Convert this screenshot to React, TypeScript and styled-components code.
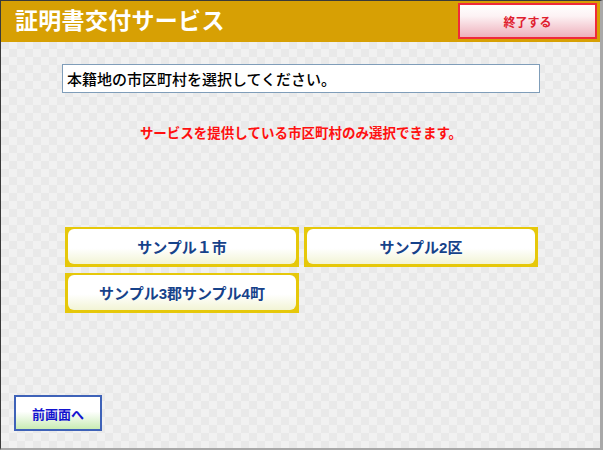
import styled, { createGlobalStyle } from "styled-components";

const GlobalStyle = createGlobalStyle`
  html, body {
    margin: 0;
    padding: 0;
  }
  body {
    font-family: "Liberation Sans", "Noto Sans CJK JP", sans-serif;
  }
`;

const Screen = styled.div`
  box-sizing: border-box;
  width: 603px;
  height: 450px;
  display: flex;
  flex-direction: column;
  border-left: 1px solid #3a3a3a;
  border-top: 1px solid #3a3a3a;
  border-right: 3px solid #a8a8a8;
  border-bottom: 2px solid #a8a8a8;
  background-color: #f1f1f1;
  background-image: linear-gradient(45deg, #e9e9e9 25%, transparent 25%, transparent 75%, #e9e9e9 75%),
    linear-gradient(45deg, #e9e9e9 25%, transparent 25%, transparent 75%, #e9e9e9 75%);
  background-size: 16px 16px;
  background-position: 0 0, 8px 8px;
`;

const Header = styled.header`
  height: 41px;
  flex-shrink: 0;
  background: #d7a004;
  display: flex;
  align-items: flex-start;
  justify-content: space-between;
  padding: 0 3px 0 14px;
`;

const Title = styled.h1`
  margin: 6px 0 0;
  color: #fff;
  font-size: 23px;
  line-height: 28px;
  font-weight: bold;
  letter-spacing: 0.3px;
`;

const ExitButton = styled.button`
  box-sizing: border-box;
  margin-top: 2px;
  width: 139px;
  height: 36px;
  border: 2px solid #f02a3a;
  background: linear-gradient(#ffffff 0%, #fdf2f4 35%, #eeb0bc 100%);
  color: #e0202e;
  font-family: inherit;
  font-size: 12px;
  font-weight: bold;
  cursor: pointer;
`;

const Main = styled.main`
  flex: 1;
  display: flex;
  flex-direction: column;
  padding: 22px 0 0 61px;
`;

const Prompt = styled.div`
  box-sizing: border-box;
  width: 478px;
  height: 29px;
  background: #fff;
  border: 1px solid #7f9db9;
  display: flex;
  align-items: center;
  padding-left: 4px;
  font-size: 15px;
  font-weight: 500;
  color: #000;
`;

const Notice = styled.p`
  margin: 29px 0 0;
  width: 478px;
  text-align: center;
  color: #ff1010;
  font-size: 13.5px;
  font-weight: bold;
`;

const Choices = styled.div`
  margin-top: 85px;
  margin-left: 3px;
  display: grid;
  grid-template-columns: 234px 234px;
  grid-auto-rows: 40px;
  column-gap: 5px;
  row-gap: 6px;
`;

const Choice = styled.button`
  box-sizing: border-box;
  padding: 2px 3px 3px 3px;
  border: none;
  background: #e6c80a;
  cursor: pointer;
  font-family: inherit;
  display: flex;
`;

const ChoiceFace = styled.span`
  flex: 1;
  border-radius: 6px;
  background: linear-gradient(#ffffff 0%, #ffffff 55%, #f2f4d4 100%);
  display: flex;
  align-items: center;
  justify-content: center;
  color: #16428a;
  font-size: 15px;
  font-weight: bold;
`;

const Footer = styled.footer`
  margin-top: auto;
  padding: 0 0 17px 13px;
`;

const BackButton = styled.button`
  box-sizing: border-box;
  width: 88px;
  height: 36px;
  border: 2px solid #3e62b8;
  background: linear-gradient(#ffffff 0%, #ffffff 45%, #c8ecb4 100%);
  color: #1414d0;
  font-family: inherit;
  font-size: 13px;
  font-weight: bold;
  cursor: pointer;
`;

const municipalities = ["サンプル１市", "サンプル2区", "サンプル3郡サンプル4町"];

export default function App() {
  return (
    <>
      <GlobalStyle />
      <Screen>
        <Header>
          <Title>証明書交付サービス</Title>
          <ExitButton>終了する</ExitButton>
        </Header>
        <Main>
          <Prompt>本籍地の市区町村を選択してください。</Prompt>
          <Notice>サービスを提供している市区町村のみ選択できます。</Notice>
          <Choices>
            {municipalities.map((name) => (
              <Choice key={name}>
                <ChoiceFace>{name}</ChoiceFace>
              </Choice>
            ))}
          </Choices>
        </Main>
        <Footer>
          <BackButton>前画面へ</BackButton>
        </Footer>
      </Screen>
    </>
  );
}
